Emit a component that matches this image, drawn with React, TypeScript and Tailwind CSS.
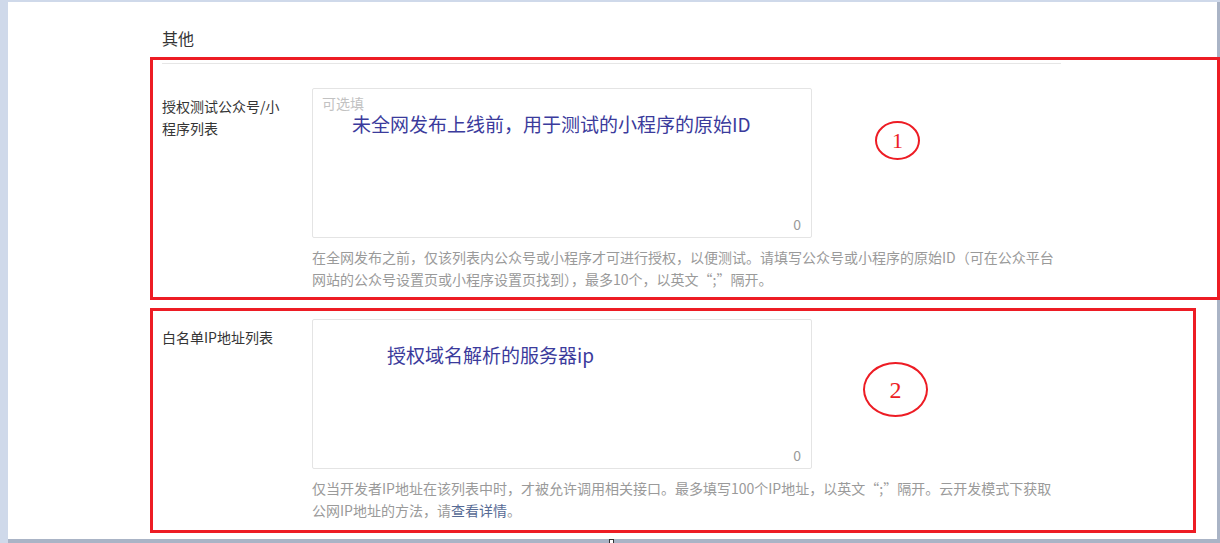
const CJK = "font-['Noto_Sans_CJK_SC','Noto_Sans',sans-serif]";

type Field = {
  label: string;
  placeholder?: string;
  help: React.ReactNode;
};

const FIELDS: Field[] = [
  {
    label: '授权测试公众号/小程序列表',
    placeholder: '可选填',
    help: '在全网发布之前，仅该列表内公众号或小程序才可进行授权，以便测试。请填写公众号或小程序的原始ID（可在公众平台网站的公众号设置页或小程序设置页找到），最多10个，以英文“;”隔开。',
  },
  {
    label: '白名单IP地址列表',
    help: (
      <>
        仅当开发者IP地址在该列表中时，才被允许调用相关接口。最多填写100个IP地址，以英文“;”隔开。云开发模式下获取公网IP地址的方法，请
        <span className="text-[#576b95]">查看详情</span>。
      </>
    ),
  },
];

function FormRow({ field, className }: { field: Field; className: string }) {
  return (
    <div className={`flex ${className}`}>
      <label className="w-[150px] shrink-0 pr-[30px] pt-[7px] text-[14px] leading-[22px] text-[#353535]">{field.label}</label>
      <div className="w-[749px]">
        <div className="relative h-[150px] w-[500px] rounded-[2px] border border-[#e4e4e4] bg-white">
          <textarea
            placeholder={field.placeholder}
            className="h-full w-full resize-none bg-transparent px-[9px] py-[3px] text-[14px] leading-[22px] text-[#353535] outline-none placeholder:text-[#c2c2c2]"
          />
          <span className="absolute bottom-[2px] right-[10px] text-[14px] leading-[22px] text-[#9a9a9a]">0</span>
        </div>
        <p className="mt-[8px] text-[14px] leading-[22px] text-[#9a9a9a]">{field.help}</p>
      </div>
    </div>
  );
}

function Mark({ n, className }: { n: string; className: string }) {
  return (
    <div
      className={`absolute flex items-center justify-center rounded-[50%] border-2 border-[#ed1c24] font-['Liberation_Serif',serif] text-[#ed1c24] ${className}`}
    >
      {n}
    </div>
  );
}

export default function App() {
  return (
    <div className={`h-[543px] w-[1220px] overflow-hidden bg-[#cfd9ea] pl-2 pt-[2px] ${CJK}`}>
      <div className="relative h-[541px] border-b-[4px] border-r-[3px] border-[#aab4c6] bg-white pl-[154px] pt-[24px]">
        <h3 className="text-[16px] leading-[24px] text-[#353535]">其他</h3>
        <div className="mt-[13px] w-[899px] border-t border-[#e6e6e6]" />

        <FormRow field={FIELDS[0]} className="mt-[24px]" />
        <FormRow field={FIELDS[1]} className="mt-[29px]" />

        {/* annotations drawn over the form */}
        <div className="absolute left-[142px] top-[55px] h-[243px] w-[1070px] border-[3px] border-[#ed1c24]" />
        <div className="absolute left-[142px] top-[306px] h-[225px] w-[1046px] border-[3px] border-[#ed1c24]" />
        <span className="absolute left-[344px] top-[110px] text-[19px] leading-[24px] text-[#3b3b9c]">未全网发布上线前，用于测试的小程序的原始ID</span>
        <span className="absolute left-[379px] top-[341px] text-[19px] leading-[24px] text-[#3b3b9c]">授权域名解析的服务器ip</span>
        <Mark n="1" className="left-[867px] top-[119px] h-[39px] w-[45px] text-[22px]" />
        <Mark n="2" className="left-[855px] top-[360px] h-[55px] w-[65px] text-[24px]" />
        <div className="absolute left-[601px] top-[537px] h-[5px] w-[5px] border border-[#333] bg-white" />
      </div>
    </div>
  );
}
